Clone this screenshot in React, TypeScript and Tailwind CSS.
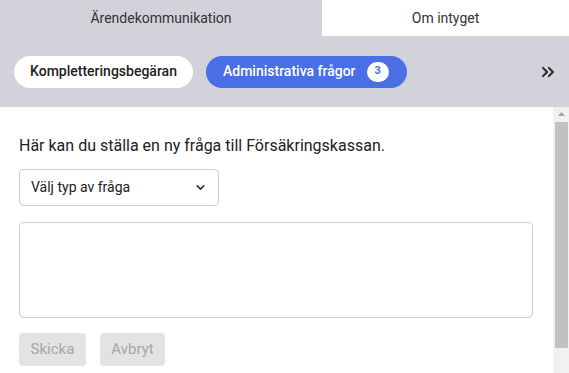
import { ChevronDown, ChevronsRight } from "lucide-react";

const FONT = "font-['Roboto','Liberation_Sans',sans-serif]";

function Tabs() {
  return (
    <div className="flex h-[36px] shrink-0 text-[14px] text-[#333]">
      <div className="flex w-[322px] items-center justify-center bg-[#d1d2da]">
        Ärendekommunikation
      </div>
      <div className="flex flex-1 items-center justify-center bg-white">Om intyget</div>
    </div>
  );
}

function Filters() {
  return (
    <div className="flex h-[71px] shrink-0 items-center bg-[#d1d2da] pl-[14px] pr-[11px]">
      <div className="flex items-center gap-[13px]">
        <button className="flex h-[32px] w-[179px] items-center justify-center rounded-full bg-white text-[14px] font-medium text-[#222]">
          Kompletteringsbegäran
        </button>
        <button className="flex h-[32px] w-[201px] items-center gap-[11px] rounded-full bg-[#4a6ee3] pl-[17px] text-[14px] font-medium text-white">
          Administrativa frågor
          <span className="flex h-[20px] w-[22px] items-center justify-center rounded-full bg-white text-[11px] font-bold text-[#4a6ee3]">
            3
          </span>
        </button>
      </div>
      <ChevronsRight className="ml-auto h-[20px] w-[20px] text-[#222]" strokeWidth={2.2} aria-hidden />
    </div>
  );
}

// fake scrollbar, the headless browser hides the real one
function Scrollbar() {
  return (
    <div className="flex w-[16px] shrink-0 flex-col items-center bg-[#f1f1f1] pt-[5px]">
      <svg width="7" height="4" viewBox="0 0 7 4" aria-hidden>
        <path d="M0 4 L3.5 0 L7 4 Z" fill="#a3a3a3" />
      </svg>
      <div className="mt-[6px] h-[226px] w-[13px] bg-[#c1c1c1]" />
    </div>
  );
}

function NewQuestion() {
  return (
    <div className="flex min-h-0 flex-1 bg-white">
      <div className="flex-1 px-[19px] pb-[12px] pt-[27px]">
        <p className="text-[16px] text-[#222]">Här kan du ställa en ny fråga till Försäkringskassan.</p>
        <div className="mt-[11px] flex h-[37px] w-[200px] items-center justify-between rounded-[4px] border border-[#ccc] pl-[11px] pr-[11px] text-[14px] text-[#222]">
          Välj typ av fråga
          <ChevronDown className="h-[13px] w-[13px] text-[#333]" strokeWidth={3} aria-hidden />
        </div>
        <div className="mt-[16px] h-[96px] w-[514px] rounded-[4px] border border-[#ccc]" />
        <div className="mt-[15px] flex gap-[14px] text-[15px] text-[#a6a6a6]">
          <button className="h-[33px] w-[67px] rounded-[4px] bg-[#e3e3e3]">Skicka</button>
          <button className="h-[33px] w-[65px] rounded-[4px] bg-[#e3e3e3]">Avbryt</button>
        </div>
      </div>
      <Scrollbar />
    </div>
  );
}

export default function App() {
  return (
    <div className={`${FONT} flex h-[373px] w-[569px] flex-col overflow-hidden`}>
      <Tabs />
      <Filters />
      <NewQuestion />
    </div>
  );
}
